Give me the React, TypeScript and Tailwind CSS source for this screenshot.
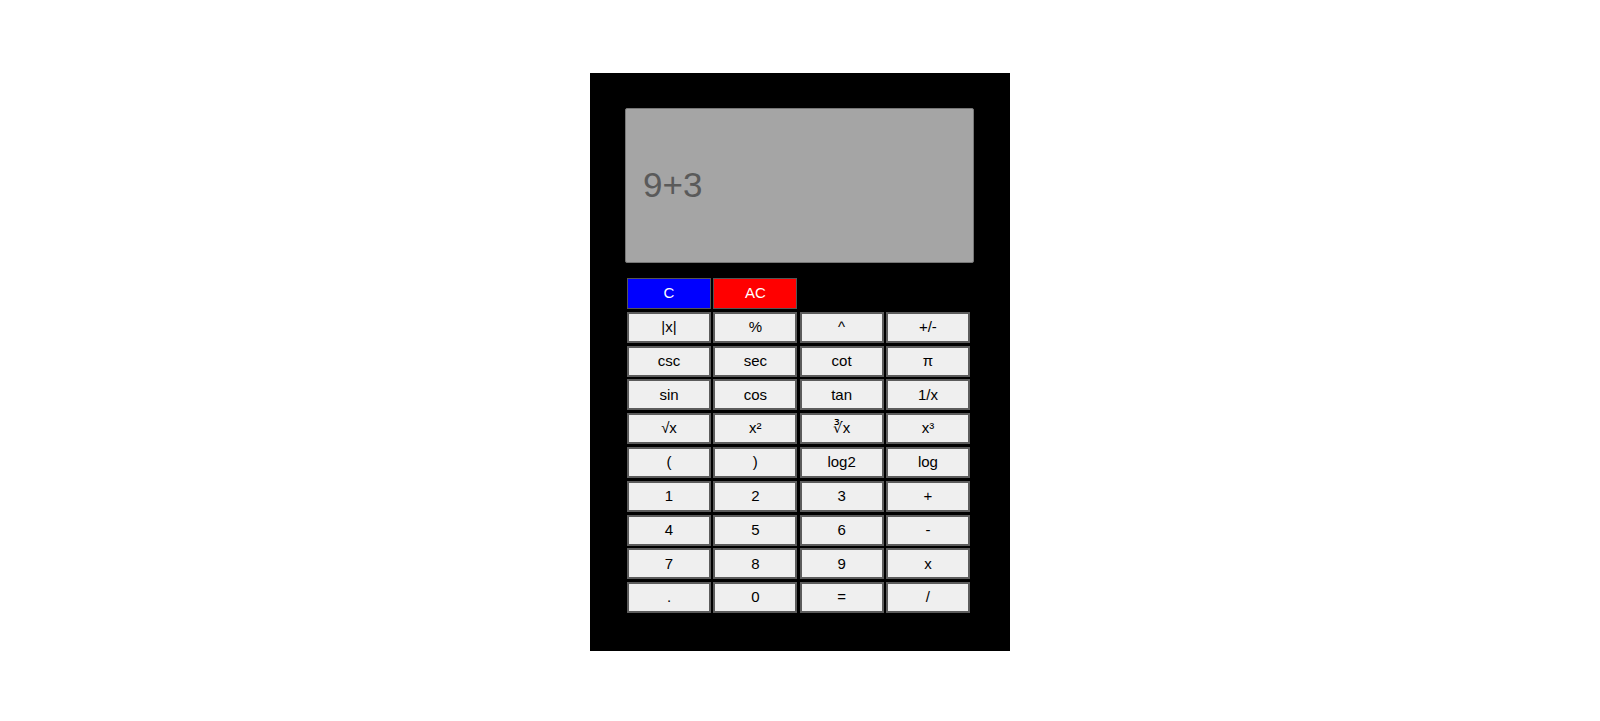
const rows: string[][] = [
  ["|x|", "%", "^", "+/-"],
  ["csc", "sec", "cot", "π"],
  ["sin", "cos", "tan", "1/x"],
  ["√x", "x²", "∛x", "x³"],
  ["(", ")", "log2", "log"],
  ["1", "2", "3", "+"],
  ["4", "5", "6", "-"],
  ["7", "8", "9", "x"],
  [".", "0", "=", "/"],
];

function Key({ label }: { label: string }) {
  return (
    <button className="h-[31px] w-[84px] border-2 border-[#5c5c5c] bg-[#efefef] text-[15px] text-black">
      {label}
    </button>
  );
}

export default function App() {
  return (
    <div className="flex min-h-screen justify-center bg-white pt-[73px] font-['Liberation_Sans',Arial,sans-serif]">
      <div className="h-[578px] w-[420px] bg-black p-[35px]">
        <div className="flex h-[155px] w-[349px] items-center rounded-[2px] border border-[#777] bg-[#a5a5a5] pl-[17px] text-[35px] text-[#5a5a5a]">
          9+3
        </div>
        <div className="mt-[15px] flex flex-col gap-[2.8px] pl-[2px]">
          <div className="flex gap-[2.3px]">
            <button className="h-[31px] w-[84px] border border-[#555] bg-[#0000ff] text-[15px] text-white">
              C
            </button>
            <button className="h-[31px] w-[84px] border border-[#555] bg-[#ff0000] text-[15px] text-white">
              AC
            </button>
          </div>
          {rows.map((row, i) => (
            <div key={i} className="flex gap-[2.3px]">
              {row.map((k) => (
                <Key key={k} label={k} />
              ))}
            </div>
          ))}
        </div>
      </div>
    </div>
  );
}
